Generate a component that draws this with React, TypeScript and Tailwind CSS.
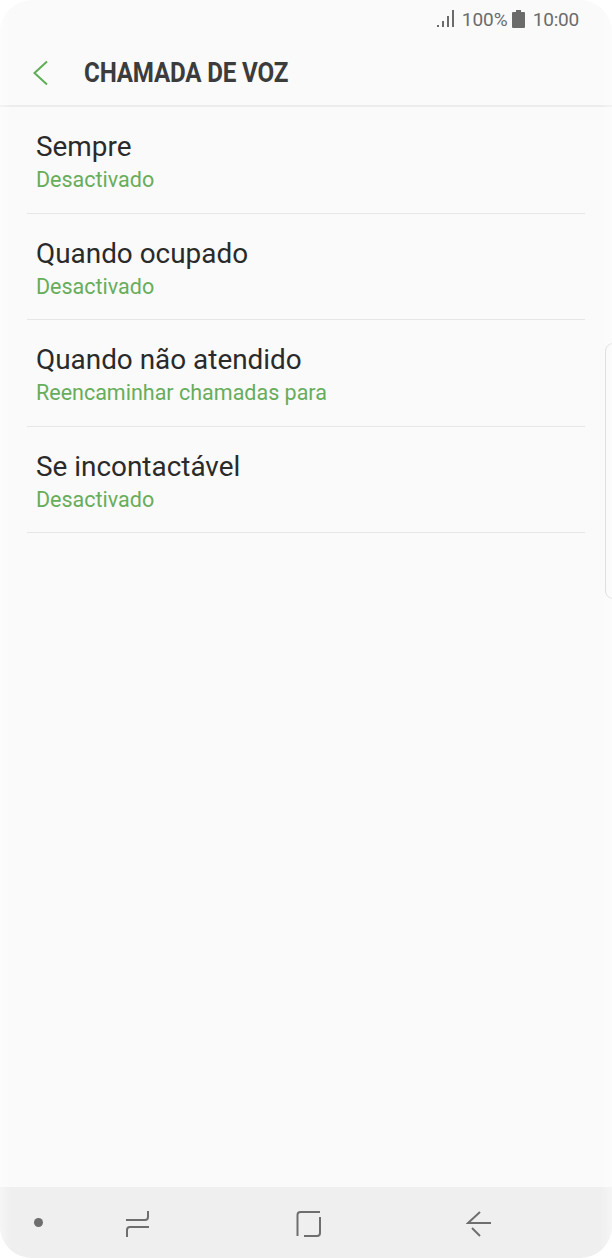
const rows = [
  { title: "Sempre", sub: "Desactivado" },
  { title: "Quando ocupado", sub: "Desactivado" },
  { title: "Quando não atendido", sub: "Reencaminhar chamadas para" },
  { title: "Se incontactável", sub: "Desactivado" },
];

export default function App() {
  return (
    <div className="relative flex h-[1258px] w-[612px] flex-col overflow-hidden rounded-[32px] bg-[#fafafa] font-['Roboto',sans-serif]">
      {/* status bar */}
      <div className="flex h-[40px] items-center justify-end pb-[2px] pr-[33px] text-[19px] leading-none text-[#6b6b6b]">
        <svg width="18" height="18" viewBox="0 0 18 18" className="mr-[7px]" fill="#6b6b6b">
          <rect x="0" y="15" width="2" height="2" />
          <rect x="5" y="11" width="2" height="6" />
          <rect x="10" y="6" width="2" height="11" />
          <rect x="15" y="0" width="2" height="17" />
        </svg>
        <span>100%</span>
        <svg width="13" height="18" viewBox="0 0 13 18" className="ml-[4px] mr-[8px]" fill="#6b6b6b">
          <path d="M4 0h5v2h3a1 1 0 0 1 1 1v14a1 1 0 0 1-1 1H1a1 1 0 0 1-1-1V3a1 1 0 0 1 1-1h3z" />
        </svg>
        <span className="tracking-[-0.2px]">10:00</span>
      </div>

      {/* header */}
      <div className="flex h-[67px] items-center border-b-2 border-[#ececec]">
        <svg width="18" height="26" viewBox="0 0 18 26" className="ml-[32px]" fill="none" stroke="#5fae55" strokeWidth="2">
          <path d="M15 1.5 2.5 13 15 24.5" />
        </svg>
        <h1 className="ml-[34px] origin-left text-[28px] font-bold leading-none tracking-[-0.2px] text-[#3c3c3c] [transform:scaleX(0.863)]">
          CHAMADA DE VOZ
        </h1>
      </div>

      {/* list */}
      <ul className="flex flex-col">
        {rows.map((r) => (
          <li key={r.title} className="mx-[27px] flex h-[106.6px] flex-col border-b border-[#e6e6e6] pl-[9px] pt-[22px]">
            <span className="text-[27.9px] leading-[36px] text-[#2a2a2a]">{r.title}</span>
            <span className="text-[21.5px] leading-[30px] text-[#67ad5b]">{r.sub}</span>
          </li>
        ))}
      </ul>

      {/* side handle */}
      <div className="absolute left-[605px] top-[343px] h-[256px] w-[12px] rounded-l-[8px] border border-[#d8d8d8]" />

      {/* nav bar */}
      <div className="mt-auto flex h-[71px] items-center bg-[#efefef]">
        <div className="ml-[34px] h-[9px] w-[9px] rounded-full bg-[#6e6e6e]" />
        <svg width="26" height="28" viewBox="0 0 26 28" className="ml-[81px] mt-[3px]" fill="none" stroke="#6e6e6e" strokeWidth="2">
          <path d="M24 1v6a3 3 0 0 1-3 3H2" />
          <path d="M25 17H6a3 3 0 0 0-3 3v7" />
        </svg>
        <svg width="26" height="28" viewBox="0 0 26 28" className="ml-[145px] mt-[3px]" fill="none" stroke="#6e6e6e" strokeWidth="2">
          <path d="M2.5 26V5a3 3 0 0 1 3-3H25" />
          <path d="M25 7v16a3 3 0 0 1-3 3H9" />
        </svg>
        <svg width="26" height="28" viewBox="0 0 26 28" className="ml-[145px] mt-[3px]" fill="none" stroke="#6e6e6e" strokeWidth="2">
          <path d="M14 2 2 13h23" />
          <path d="M6 18l8 8" />
        </svg>
      </div>

      {/* screen edge glare */}
      <div className="pointer-events-none absolute inset-y-0 left-0 w-[12px] bg-gradient-to-r from-white/40 to-transparent" />
      <div className="pointer-events-none absolute inset-y-0 right-0 w-[12px] bg-gradient-to-l from-white/40 to-transparent" />
    </div>
  );
}
